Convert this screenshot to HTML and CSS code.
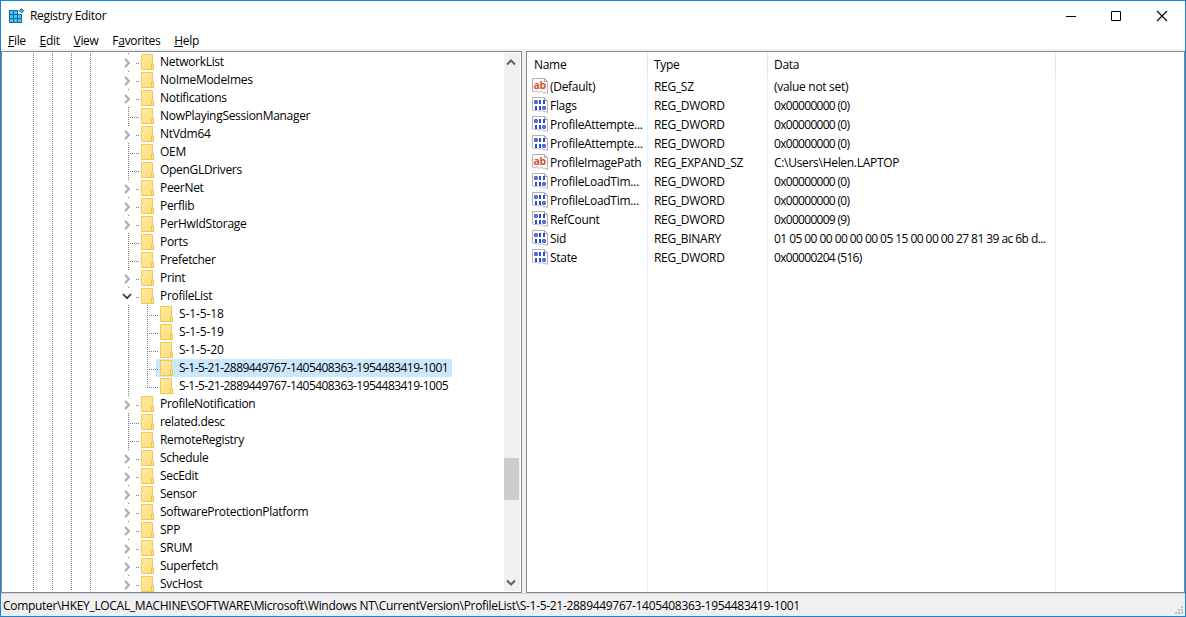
FILE: index.html
```html
<!DOCTYPE html>
<html lang="en">
<head>
<meta charset="utf-8">
<title>Registry Editor</title>
<link rel="stylesheet" href="styles.css">
</head>
<body>
<svg class="defs" width="0" height="0" aria-hidden="true">
  <linearGradient id="fold" x1="0" y1="0" x2="1" y2="1"><stop offset="0" stop-color="#ffe9a2"/><stop offset="1" stop-color="#ffdc78"/></linearGradient>
  <symbol id="folder" viewBox="0 0 13 16"><path d="M.5 .5h11v10l1 1v4H.5z" fill="url(#fold)" stroke="#f0cb51"/><path d="M10.500 15.500v-5h2v5z" fill="#ffe38c" stroke="#ecc444"/></symbol>
  <symbol id="right" viewBox="0 0 7 10"><path d="M1 1l4 4-4 4" fill="none" stroke="#a6a6a6" stroke-width="1.8"/></symbol>
  <symbol id="down" viewBox="0 0 10 7"><path d="M1 1.200l4 4 4-4" fill="none" stroke="#404040" stroke-width="1.8"/></symbol>
  <symbol id="page" viewBox="0 0 16 16"><path d="M.5 .5h12l3 3v12l-2-1-2 .5-2-2-2 1.500-2-1.500-2 .5-3-.5z" fill="#fff" stroke="#b4b4b4"/><path d="M12.500 .5v3h3" fill="none" stroke="#a9a9a9"/></symbol>
  <symbol id="bin" viewBox="0 0 16 16"><use href="#page"/><path d="M7 3h2v4H7zM11 3h2v4h-2zM3 9h2v4H3zM7 9h2v4H7z" fill="#2a4bd7"/><g fill="none" stroke="#2a4bd7" stroke-width="1.400"><rect x="2.700" y="3.700" width="2.600" height="2.600" rx="1"/><rect x="10.700" y="9.700" width="2.600" height="2.600" rx="1"/></g></symbol>
</svg>
<div class="window">
  <header class="titlebar">
    <svg class="app-icon" viewBox="0 0 16 16"><path d="M0 2h9v4h4v9H0z" fill="#0a70a5"/><path d="M1 3h3v3H1zM5 3h3v3H5zM1 7h3v3H1zM5 7h3v3H5zM9 7h3v3H9zM1 11h3v3H1zM5 11h3v3H5zM9 11h3v3H9z" fill="#49c2f1"/><path d="M12.500 .5l2.200 2.200-2.200 2.200-2.200-2.200z" fill="#49b5dc" stroke="#17749c"/></svg>
    <h1 class="title">Registry Editor</h1>
    <svg class="controls" viewBox="0 0 104 13"><path d="M0 6.500h10" stroke="#000"/><path d="M45.500 1.500h9v9h-9z" fill="none" stroke="#000"/><path d="M91 1l10 10M101 1L91 11" stroke="#000" stroke-width="1.100"/></svg>
  </header>
  <nav class="menu"><span><u>F</u>ile</span><span><u>E</u>dit</span><span><u>V</u>iew</span><span>F<u>a</u>vorites</span><span><u>H</u>elp</span></nav>
  <main class="panes">
    <section class="pane tree-pane">
      <div class="rails"><i></i><i></i><i></i><i></i></div>
      <ul class="tree">
        <li class="key more"><svg class="arrow"><use href="#right"/></svg><svg class="folder"><use href="#folder"/></svg><span>NetworkList</span></li>
        <li class="key more"><svg class="arrow"><use href="#right"/></svg><svg class="folder"><use href="#folder"/></svg><span>NoImeModeImes</span></li>
        <li class="key more"><svg class="arrow"><use href="#right"/></svg><svg class="folder"><use href="#folder"/></svg><span>Notifications</span></li>
        <li class="key"><svg class="folder"><use href="#folder"/></svg><span>NowPlayingSessionManager</span></li>
        <li class="key more"><svg class="arrow"><use href="#right"/></svg><svg class="folder"><use href="#folder"/></svg><span>NtVdm64</span></li>
        <li class="key"><svg class="folder"><use href="#folder"/></svg><span>OEM</span></li>
        <li class="key"><svg class="folder"><use href="#folder"/></svg><span>OpenGLDrivers</span></li>
        <li class="key more"><svg class="arrow"><use href="#right"/></svg><svg class="folder"><use href="#folder"/></svg><span>PeerNet</span></li>
        <li class="key more"><svg class="arrow"><use href="#right"/></svg><svg class="folder"><use href="#folder"/></svg><span>Perflib</span></li>
        <li class="key more"><svg class="arrow"><use href="#right"/></svg><svg class="folder"><use href="#folder"/></svg><span>PerHwIdStorage</span></li>
        <li class="key"><svg class="folder"><use href="#folder"/></svg><span>Ports</span></li>
        <li class="key"><svg class="folder"><use href="#folder"/></svg><span>Prefetcher</span></li>
        <li class="key more"><svg class="arrow"><use href="#right"/></svg><svg class="folder"><use href="#folder"/></svg><span>Print</span></li>
        <li class="key more"><svg class="arrow open"><use href="#down"/></svg><svg class="folder"><use href="#folder"/></svg><span>ProfileList</span></li>
        <li class="branch">
          <ul class="children">
            <li class="child"><svg class="folder"><use href="#folder"/></svg><span>S-1-5-18</span></li>
            <li class="child"><svg class="folder"><use href="#folder"/></svg><span>S-1-5-19</span></li>
            <li class="child"><svg class="folder"><use href="#folder"/></svg><span>S-1-5-20</span></li>
            <li class="child selected"><svg class="folder"><use href="#folder"/></svg><span class="sid">S-1-5-21-2889449767-1405408363-1954483419-1001</span></li>
            <li class="child"><svg class="folder"><use href="#folder"/></svg><span class="sid">S-1-5-21-2889449767-1405408363-1954483419-1005</span></li>
          </ul>
        </li>
        <li class="key more"><svg class="arrow"><use href="#right"/></svg><svg class="folder"><use href="#folder"/></svg><span>ProfileNotification</span></li>
        <li class="key"><svg class="folder"><use href="#folder"/></svg><span>related.desc</span></li>
        <li class="key"><svg class="folder"><use href="#folder"/></svg><span>RemoteRegistry</span></li>
        <li class="key more"><svg class="arrow"><use href="#right"/></svg><svg class="folder"><use href="#folder"/></svg><span>Schedule</span></li>
        <li class="key more"><svg class="arrow"><use href="#right"/></svg><svg class="folder"><use href="#folder"/></svg><span>SecEdit</span></li>
        <li class="key more"><svg class="arrow"><use href="#right"/></svg><svg class="folder"><use href="#folder"/></svg><span>Sensor</span></li>
        <li class="key more"><svg class="arrow"><use href="#right"/></svg><svg class="folder"><use href="#folder"/></svg><span>SoftwareProtectionPlatform</span></li>
        <li class="key more"><svg class="arrow"><use href="#right"/></svg><svg class="folder"><use href="#folder"/></svg><span>SPP</span></li>
        <li class="key more"><svg class="arrow"><use href="#right"/></svg><svg class="folder"><use href="#folder"/></svg><span>SRUM</span></li>
        <li class="key more"><svg class="arrow"><use href="#right"/></svg><svg class="folder"><use href="#folder"/></svg><span>Superfetch</span></li>
        <li class="key more"><svg class="arrow"><use href="#right"/></svg><svg class="folder"><use href="#folder"/></svg><span>SvcHost</span></li>
      </ul>
      <div class="scrollbar"><svg class="up" viewBox="0 0 10 7"><path d="M1 5.500l4-4 4 4" /></svg><div class="thumb"></div><svg class="dn" viewBox="0 0 10 7"><path d="M1 1.500l4 4 4-4"/></svg></div>
    </section>
    <section class="pane values">
      <div class="row head"><span>Name</span><span>Type</span><span>Data</span></div>
      <div class="row"><span class="name"><svg viewBox="0 0 16 16"><use href="#page"/><text x="1.500" y="10.500" class="glyph">ab</text></svg>(Default)</span><span>REG_SZ</span><span>(value not set)</span></div>
      <div class="row"><span class="name"><svg><use href="#bin"/></svg>Flags</span><span>REG_DWORD</span><span class="hex">0x00000000 (0)</span></div>
      <div class="row"><span class="name"><svg><use href="#bin"/></svg>ProfileAttempte...</span><span>REG_DWORD</span><span class="hex">0x00000000 (0)</span></div>
      <div class="row"><span class="name"><svg><use href="#bin"/></svg>ProfileAttempte...</span><span>REG_DWORD</span><span class="hex">0x00000000 (0)</span></div>
      <div class="row"><span class="name"><svg viewBox="0 0 16 16"><use href="#page"/><text x="1.500" y="10.500" class="glyph">ab</text></svg>ProfileImagePath</span><span>REG_EXPAND_SZ</span><span>C:\Users\Helen.LAPTOP</span></div>
      <div class="row"><span class="name"><svg><use href="#bin"/></svg>ProfileLoadTim...</span><span>REG_DWORD</span><span class="hex">0x00000000 (0)</span></div>
      <div class="row"><span class="name"><svg><use href="#bin"/></svg>ProfileLoadTim...</span><span>REG_DWORD</span><span class="hex">0x00000000 (0)</span></div>
      <div class="row"><span class="name"><svg><use href="#bin"/></svg>RefCount</span><span>REG_DWORD</span><span class="hex">0x00000009 (9)</span></div>
      <div class="row"><span class="name"><svg><use href="#bin"/></svg>Sid</span><span>REG_BINARY</span><span class="bytes">01 05 00 00 00 00 00 05 15 00 00 00 27 81 39 ac 6b d...</span></div>
      <div class="row"><span class="name"><svg><use href="#bin"/></svg>State</span><span>REG_DWORD</span><span class="hex">0x00000204 (516)</span></div>
      <div class="row rest"><span></span><span></span><span></span></div>
    </section>
  </main>
  <footer class="status"><span>Computer\HKEY_LOCAL_MACHINE\SOFTWARE\Microsoft\Windows NT\CurrentVersion\ProfileList\S-1-5-21-2889449767-1405408363-1954483419-1001</span>
    <svg class="grip" viewBox="0 0 8 8"><path d="M6 0h2v2H6zM3 3h2v2H3zM6 3h2v2H6zM0 6h2v2H0zM3 6h2v2H3zM6 6h2v2H6z" fill="#bfbfbf"/></svg></footer>
</div>
</body>
</html>
```
FILE: styles.css
```css
* { box-sizing: border-box; }
body { margin: 0; font: 12px/18px "Open Sans", "Noto Sans", sans-serif; letter-spacing: -0.3px; color: #000; }
ul { list-style: none; margin: 0; padding: 0; }
svg { display: block; flex: none; }
.defs { position: absolute; }
.window { width: 1186px; height: 617px; border: 1px solid #1883d7; background: #fff; display: flex; flex-direction: column; overflow: hidden; white-space: nowrap; }
.titlebar { height: 30px; display: flex; align-items: center; padding: 0 15px 0 8px; flex: none; }
.app-icon { width: 16px; height: 16px; }
.title { margin: 0 auto 0 5px; font-size: 12px; font-weight: 400; letter-spacing: -0.33px; }
.controls { width: 104px; height: 13px; }
.menu { height: 18px; flex: none; display: flex; gap: 13.8px; padding: 1px 7px 0; }
.menu u { text-decoration: underline; text-underline-offset: 1px; }
.panes { background: #f0f0f0; padding-top: 2px; height: 544px; flex: none; display: flex; gap: 4px; }
.pane { border: 1px solid #828790; background: #fff; height: 542px; overflow: hidden; padding: 1px; display: flex; }
.tree-pane { width: 521px; }
.rails { width: 119px; padding-left: 30px; display: flex; gap: 18px; }
.rails i { width: 1px; background: repeating-linear-gradient(#777 0 1px, transparent 1px 2px); }
.tree { flex: 1; }
.key, .child { height: 18px; display: flex; align-items: center; position: relative; }
.key { padding-left: 19px; }
.key::before { content: ""; position: absolute; left: 6px; top: 0; width: 1px; height: 18px; background: repeating-linear-gradient(#777 0 1px, transparent 1px 2px); }
.key::after { content: ""; position: absolute; left: 6px; top: 10px; width: 12px; height: 1px; background: repeating-linear-gradient(90deg, #777 0 1px, transparent 1px 2px); }
.more::before { height: 1px; }
.more::after { left: 14px; width: 4px; }
.arrow { position: absolute; left: 2px; top: 5px; width: 7px; height: 10px; }
.arrow.open { left: 0; top: 6px; width: 10px; height: 7px; }
.folder { width: 13px; height: 16px; margin-right: 6px; }
.branch { padding-left: 25px; background: repeating-linear-gradient(#777 0 1px, transparent 1px 2px) 6px 0 / 1px 100% no-repeat; }
.child { padding-left: 13px; }
.child::before { content: ""; position: absolute; left: 0; top: 0; width: 1px; height: 18px; background: repeating-linear-gradient(#777 0 1px, transparent 1px 2px); }
.child:last-child::before { height: 11px; }
.child::after { content: ""; position: absolute; left: 0; top: 10px; width: 11px; height: 1px; background: repeating-linear-gradient(90deg, #777 0 1px, transparent 1px 2px); }
.selected { background: linear-gradient(#cce8ff, #cce8ff) 9px 0 / 296px 100% no-repeat; }
.child span { letter-spacing: -0.1px; }
.child .sid { letter-spacing: -0.55px; }
.scrollbar { width: 16px; padding-right: 1px; height: 538px; background: #f0f0f0; display: flex; flex-direction: column; }
.scrollbar path { fill: none; stroke: #606060; stroke-width: 2; }
.up { width: 10px; height: 7px; margin: 6px 0 392px 2px; }
.dn { width: 10px; height: 7px; margin: auto 0 5px 2px; }
.thumb { height: 42px; background: #cdcdcd; }
.values { width: 659px; flex-direction: column; }
.row { height: 19px; display: grid; grid-template-columns: 120px 120px 288px; line-height: 19px; flex: none; }
.row > span { border-right: 1px solid #e8f1fb; padding-left: 6px; overflow: hidden; }
.head { height: 24px; line-height: 24px; }
.head > span { border-color: #e5e5e5; }
.row > .name { display: flex; padding-left: 4px; }
.name svg { width: 16px; height: 16px; margin: 1px 2px 0 0; }
.hex { letter-spacing: -0.7px; }
.bytes { letter-spacing: -0.56px; }
.rest { flex: 1; }
.glyph { font: bold 10.5px "Open Sans", sans-serif; fill: #d9502e; letter-spacing: -0.3px; }
.status { height: 23px; background: #f0f0f0; border-top: 1px solid #d7d7d7; padding: 3px 2px 0; position: relative; letter-spacing: -0.31px; }
.grip { width: 8px; height: 8px; position: absolute; right: 2px; bottom: 2px; }
```
